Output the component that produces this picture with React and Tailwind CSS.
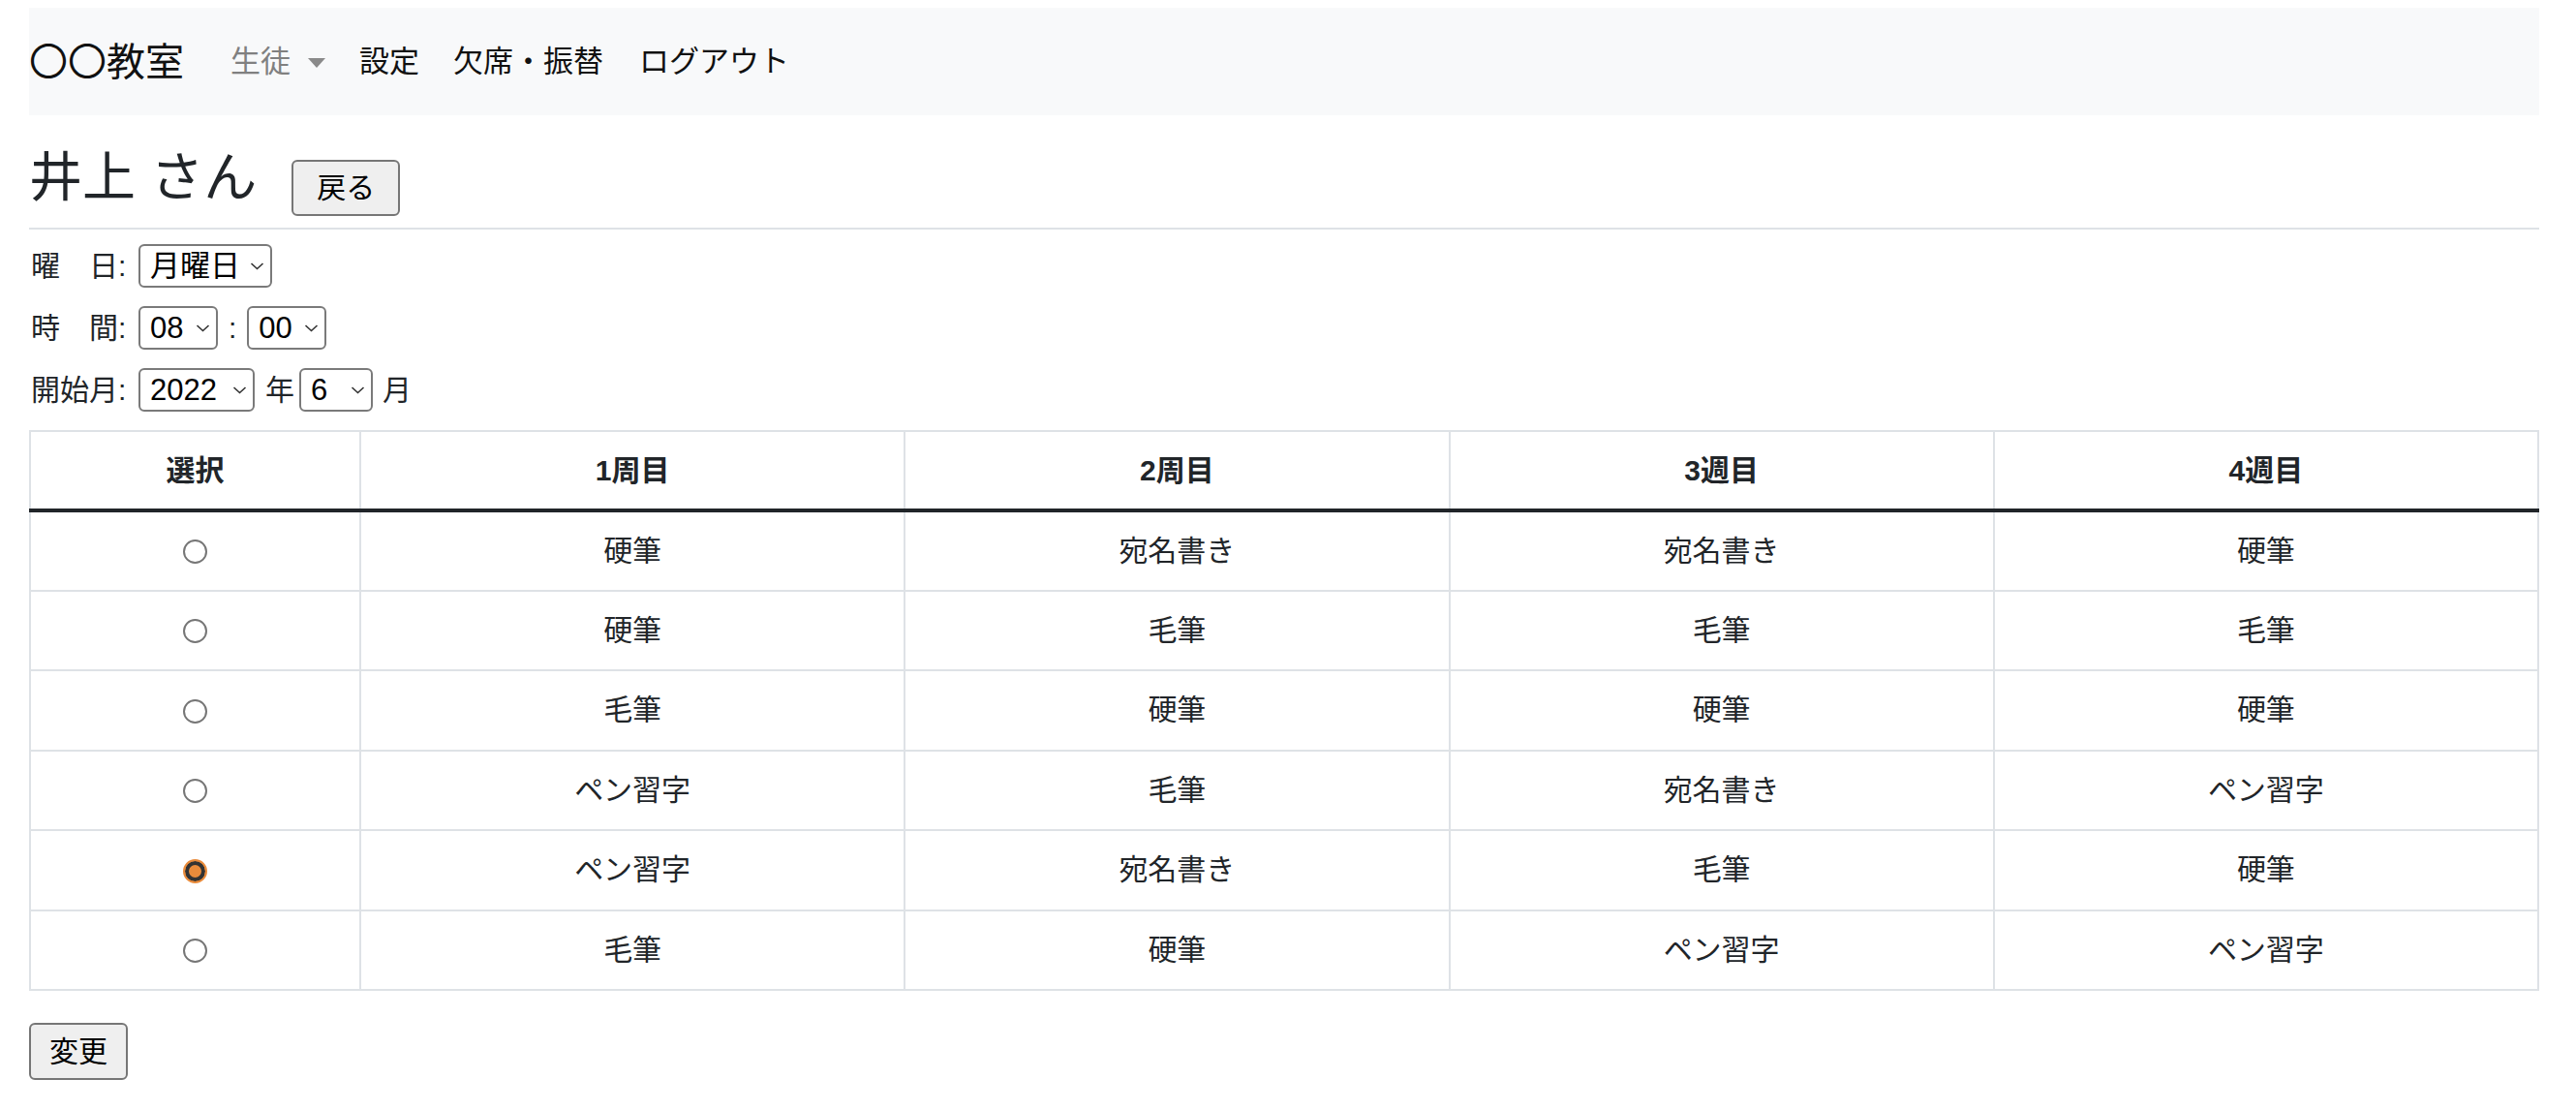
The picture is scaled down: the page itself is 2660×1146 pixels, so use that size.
import React from "react";

const rows = [
  ["硬筆", "宛名書き", "宛名書き", "硬筆"],
  ["硬筆", "毛筆", "毛筆", "毛筆"],
  ["毛筆", "硬筆", "硬筆", "硬筆"],
  ["ペン習字", "毛筆", "宛名書き", "ペン習字"],
  ["ペン習字", "宛名書き", "毛筆", "硬筆"],
  ["毛筆", "硬筆", "ペン習字", "ペン習字"],
];

function Chevron() {
  return (
    <svg
      className="pointer-events-none absolute right-[8px] top-1/2 -translate-y-1/2"
      width="15"
      height="9"
      viewBox="0 0 15 9"
      fill="none"
    >
      <path d="M1.5 1.5 L7.5 7 L13.5 1.5" stroke="#333" strokeWidth="1.6" />
    </svg>
  );
}

function Sel({ w, value, options }) {
  return (
    <span className={"relative inline-flex h-[45px] " + w}>
      <select
        defaultValue={value}
        className="h-full w-full appearance-none rounded-[6px] border-2 border-[#7a7a7a] bg-white pl-[10px] pr-[26px] text-[31px] leading-none text-black outline-none"
      >
        {options.map((o) => (
          <option key={o} value={o}>
            {o}
          </option>
        ))}
      </select>
      <Chevron />
    </span>
  );
}

export default function App() {
  return (
    <div
      className="min-h-[1146px] bg-white text-[#212529]"
      style={{ fontFamily: '"Liberation Sans", "Noto Sans CJK JP", sans-serif' }}
    >
      <div className="ml-[30px] w-[2592px] pt-[8px]">
        {/* navbar */}
        <nav className="flex h-[111px] items-center bg-[#f8f9fa]">
          <span className="w-[208px] text-[40px] leading-none text-[#111]">〇〇教室</span>
          <span className="flex w-[133px] items-center text-[31px] leading-none text-[#808080]">
            生徒
            <span className="ml-[18px] mt-[2px] h-0 w-0 border-x-[9px] border-t-[10px] border-x-transparent border-t-[#8a8a8a]" />
          </span>
          <span className="w-[97px] text-[31px] leading-none text-[#111]">設定</span>
          <span className="w-[192px] text-[31px] leading-none text-[#111]">欠席・振替</span>
          <span className="text-[31px] leading-none text-[#111]">ログアウト</span>
        </nav>

        {/* title */}
        <div className="mt-[32px] flex items-start">
          <h2 className="text-[55px] font-normal leading-[64px] text-[#212529]">井上 さん</h2>
          <button className="ml-[36px] mt-[14px] flex h-[58px] w-[112px] items-center justify-center rounded-[6px] border-2 border-[#767676] bg-[#efefef] text-[30px] leading-none text-black">
            戻る
          </button>
        </div>
        <div className="mt-[12px] h-[2px] bg-[#dee2e6]" />

        {/* form */}
        <div className="mt-[15px] flex flex-col gap-[19px] text-[30px] leading-none text-[#212529]">
          <div className="flex h-[45px] items-center">
            <span className="w-[113px] pl-[2px]">曜　日:</span>
            <Sel w="w-[138px]" value="月曜日" options={["月曜日", "火曜日", "水曜日", "木曜日", "金曜日", "土曜日", "日曜日"]} />
          </div>
          <div className="flex h-[45px] items-center">
            <span className="w-[113px] pl-[2px]">時　間:</span>
            <Sel w="w-[82px]" value="08" options={["08", "09", "10", "11", "12"]} />
            <span className="mx-[11px]">:</span>
            <Sel w="w-[82px]" value="00" options={["00", "15", "30", "45"]} />
          </div>
          <div className="flex h-[45px] items-center">
            <span className="w-[113px] pl-[2px]">開始月:</span>
            <Sel w="w-[120px]" value="2022" options={["2022", "2023"]} />
            <span className="ml-[11px] mr-[5px]">年</span>
            <Sel w="w-[76px]" value="6" options={["1", "2", "3", "4", "5", "6", "7", "8", "9", "10", "11", "12"]} />
            <span className="ml-[10px]">月</span>
          </div>
        </div>

        {/* table */}
        <table className="mt-[19px] w-full table-fixed border-collapse text-[30px] text-[#212529]">
          <colgroup>
            <col className="w-[341px]" />
            <col />
            <col />
            <col />
            <col />
          </colgroup>
          <thead>
            <tr>
              {["選択", "1周目", "2周目", "3週目", "4週目"].map((h) => (
                <th
                  key={h}
                  className="h-[82px] border-2 border-b-4 border-[#dee2e6] border-b-[#212529] p-0 text-center align-middle font-bold leading-none"
                >
                  {h}
                </th>
              ))}
            </tr>
          </thead>
          <tbody>
            {rows.map((r, i) => (
              <tr key={i}>
                <td className="h-[82.5px] border-2 border-[#dee2e6] p-0 text-center align-middle">
                  <input
                    type="radio"
                    name="sel"
                    defaultChecked={i === 4}
                    className="m-0 inline-block h-[25px] w-[25px] translate-y-[3px] appearance-none rounded-full border-2 border-[#767676] bg-white checked:border-[#e98b3b] checked:bg-[#e98b3b] checked:shadow-[inset_0_0_0_4px_#333]"
                  />
                </td>
                {r.map((c, j) => (
                  <td
                    key={j}
                    className="h-[82.5px] border-2 border-[#dee2e6] p-0 text-center align-middle leading-none"
                  >
                    {c}
                  </td>
                ))}
              </tr>
            ))}
          </tbody>
        </table>

        <button className="mt-[33px] flex h-[59px] w-[102px] items-center justify-center rounded-[6px] border-2 border-[#767676] bg-[#efefef] text-[30px] leading-none text-black">
          変更
        </button>
      </div>
    </div>
  );
}
